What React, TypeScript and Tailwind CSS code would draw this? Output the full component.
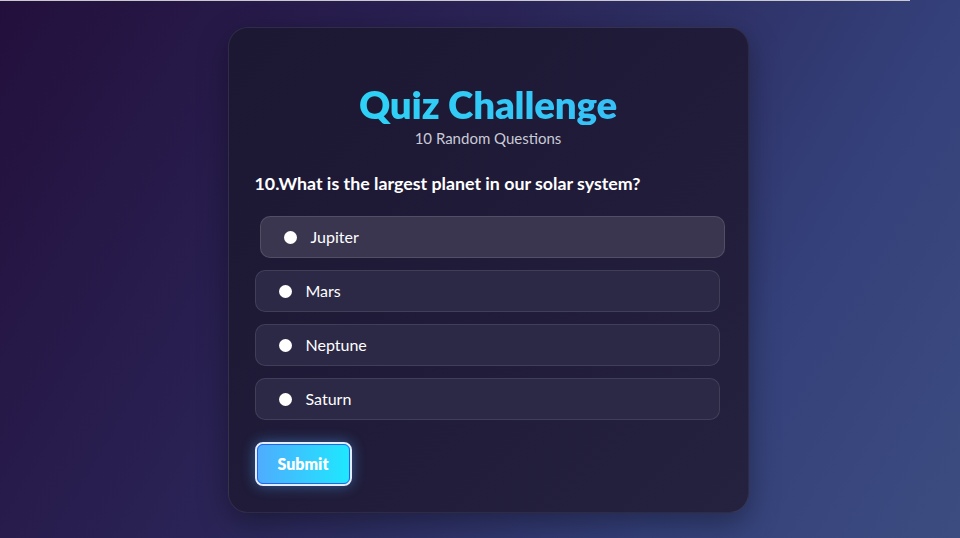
import React from "react";

const options = ["Jupiter", "Mars", "Neptune", "Saturn"];

export default function App() {
  return (
    <div
      className="relative w-full h-[538px] overflow-hidden bg-[linear-gradient(120deg,#230f3c_0%,#2a2456_40%,#34407a_75%,#3c4c80_100%)] flex justify-center pt-[27px]"
      style={{ fontFamily: "Lato, 'Noto Sans', sans-serif" }}
    >
      <div className="absolute top-0 left-0 w-[910px] h-[1px] bg-[#c9c9cf]" />
      <div className="w-[521px] h-[486px] ml-[16px] rounded-[20px] border border-[#ffffff14] bg-[linear-gradient(135deg,#1c1833_0%,#1f1b38_50%,#25223f_100%)] shadow-[0_10px_30px_rgba(0,0,0,0.35)] px-[26px] pt-[55px]">
        <h1 className="text-center text-[38.5px] leading-[42px] font-extrabold bg-[linear-gradient(90deg,#2ad9f5,#3ab9f7)] bg-clip-text text-transparent tracking-[-0.2px]">
          Quiz Challenge
        </h1>
        <p className="text-center text-[15px] leading-[20px] text-[#c9cad6] mt-[3px]">10 Random Questions</p>
        <h2 className="mt-[22px] text-[17.8px] leading-[26px] font-bold text-white">
          10.What is the largest planet in our solar system?
        </h2>
        <div className="mt-[20px] flex flex-col gap-[12px]">
          {options.map((o, i) => (
            <div
              key={o}
              className={
                i === 0
                  ? "h-[42px] w-[465px] translate-x-[5px] rounded-[10px] border border-[#ffffff1f] bg-[#3a3650] flex items-center pl-[23px]"
                  : "h-[42px] w-[465px] rounded-[10px] border border-[#ffffff1a] bg-[#2c2946] flex items-center pl-[23px]"
              }
            >
              <span className="w-[13px] h-[13px] rounded-full bg-white" />
              <span className="ml-[14px] text-[16px] text-white">{o}</span>
            </div>
          ))}
        </div>
        <button className="mt-[22px] w-[97px] h-[44px] rounded-[8px] border-2 border-[#e6ecff] outline outline-1 outline-[#2563eb] -outline-offset-[3px] bg-[linear-gradient(90deg,#4facfe,#1ee8fe)] shadow-[0_0_14px_rgba(79,172,254,0.45)] text-white font-extrabold text-[16px]">
          Submit
        </button>
      </div>
    </div>
  );
}
